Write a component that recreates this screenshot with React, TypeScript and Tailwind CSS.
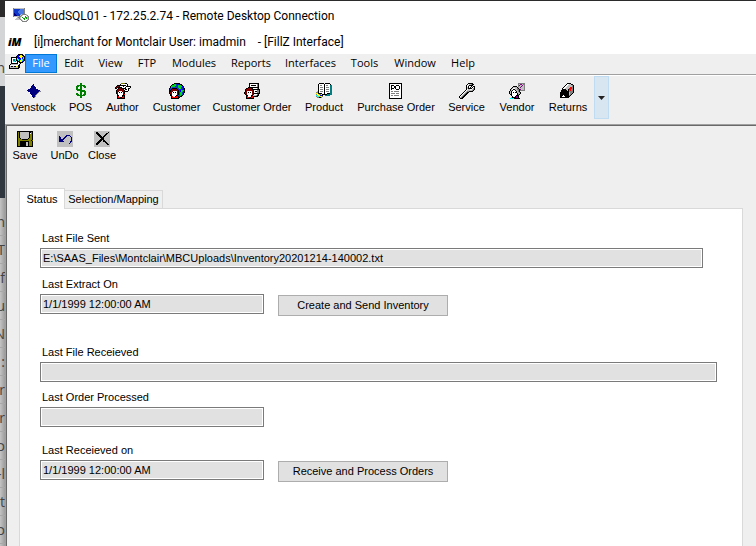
import type { ReactNode } from 'react'

const PALETTE: Record<string, string> = {
  k: '#000000',
  w: '#ffffff',
  g: '#808080',
  s: '#c0c0c0',
  n: '#000080',
  b: '#0000ff',
  e: '#00a000',
  l: '#00d820',
  d: '#008000',
  r: '#ff0000',
  m: '#800000',
  y: '#ffff00',
  o: '#808000',
  p: '#800080',
  c: '#00ffff',
  t: '#008080',
  u: '#1038c8',
  a: '#4878e0',
}

// 16x16 bitmap icon, one character per pixel
function PixelIcon({ rows }: { rows: string[] }) {
  return (
    <svg viewBox="0 0 16 16" className="h-4 w-4 shrink-0" shapeRendering="crispEdges" aria-hidden="true">
      {rows.flatMap((row, y) =>
        row.split('').map((ch, x) =>
          PALETTE[ch] ? <rect key={`${x}-${y}`} x={x} y={y} width="1" height="1" fill={PALETTE[ch]} /> : null,
        ),
      )}
    </svg>
  )
}

const ICONS = {
  venstock: [
    '................',
    '.......n........',
    '......nnw.......',
    '.....nnnnw......',
    '.....nnnnnw.....',
    '....nnnnnnw.....',
    '..nnnnnnnnnn....',
    '.nnnnnnnnnnnnn..',
    '..nnnnnnnnnnngg.',
    '...wnnnnnnnng...',
    '....nnnnnnng....',
    '....wnnnnng.....',
    '.....wnnng......',
    '......nnng......',
    '.......ng.......',
    '................',
  ],
  pos: [
    '.......dd.......',
    '.......dd.......',
    '....dddddddd....',
    '...ddd.dd.ddd...',
    '...dd..dd..dd...',
    '...dd..dd.......',
    '...dddddd.......',
    '....dddddddd....',
    '.......dddddd...',
    '.......dd..dd...',
    '...dd..dd..dd...',
    '...ddd.dd.ddd...',
    '....dddddddd....',
    '.......dd.......',
    '.......dd.......',
    '................',
  ],
  author: [
    '......ooookk....',
    '.....kwwwwwwk...',
    '..kkkkkkkkkwk...',
    '.kmmkwwwkwwkkkkk',
    'kmkkkkkwwwkwwwwk',
    'kk.kmmkkkkkwwkk.',
    '..kmmmmmkwkkwk..',
    '.kmmmmmmmkwwwk..',
    '.kmmwwwmmkkkk...',
    '.kmwkwkwmk......',
    '.kmwwwwwmk......',
    '..kwwwwwkr......',
    '..kkwwwkkk......',
    '..krwwwkrk......',
    '..krrkkrrk......',
    '..kkkkkkkk......',
  ],
  customer: [
    '.....kkkkkk.....',
    '...kkllubbkkk...',
    '..klllluulllbk..',
    '.klllluuullllbk.',
    '.kluuuuuulllubk.',
    'kuukkkkkuulluubk',
    'kukmmmmmkuuuubbk',
    'kkmmmmmmmkublllk',
    'kkmmwwwwmkubllbk',
    'kmmwkwkwmkullubk',
    'kmmwwwwwmkulluk.',
    '.kmwwwwwmkulluk.',
    '.kkwwwwkkuulbk..',
    '..krwwkrrkukk...',
    '..krrrrrrkk.....',
    '..kkkkkkkk......',
  ],
  customerOrder: [
    '.....kkkkkkkkkk.',
    '.....kwwwwwwwgk.',
    '.....kwkkkkkwgk.',
    '.....kwwwwwwwgk.',
    '....kkkkkkkkkkk.',
    '..kkmmmkkwwwwgk.',
    '.kmmmmmmkkkkkkkk',
    '.kmmmmmmmkwwwggk',
    '.kmwwwwwmkwkkggk',
    'kmmwkwkwmkwwwggk',
    'kmmwwwwwmkkkkkkk',
    '.kmwwwwwmkwwwgk.',
    '..kkwwwkksssgkk.',
    '..krwwwkrkkkkk..',
    '..krrkkrrk......',
    '..kkkkkkkk......',
  ],
  product: [
    '...kkkkk.kkkkk..',
    '..kwwwwwkwwwwwk.',
    '..kwggwwkwggwwtt',
    '..kwwwwwkwwwwwtt',
    '..kwgggwkwgggwtt',
    '..kwwwwwkwwwwwtt',
    '..kwgggwkwgggwtt',
    '..kwwwwwkwwwwwtt',
    '.ckwgggwkwgggwtt',
    'ggkwwwwwkwwwwwtt',
    'yykkkkwwkwwkkktt',
    'gyyggykkkkkttttt',
    'ccyybbk..ttttt..',
    'gcccyyg.........',
    '.ggkkg..........',
    '................',
  ],
  purchaseOrder: [
    '.kkkkkkkkkkkkk..',
    '.kwwwwwwwwwwwk..',
    '.kwkkkwwkkkwwk..',
    '.kwkwwkkwwwkwk..',
    '.kwkwwkkwwwkwk..',
    '.kwkkkwkwwwkwk..',
    '.kwkwwwwkkkwwk..',
    '.kwwwwwwwwwwwk..',
    '.kwggwgggggwwk..',
    '.kwwwwwwwwwwwk..',
    '.kwggggwgggwwk..',
    '.kwwwwwwwwwwwk..',
    '.kwggwgggggwwk..',
    '.kwwwwwwwwwwwk..',
    '.kwwwwwwwwwwwk..',
    '.kkkkkkkkkkkkk..',
  ],
  service: [
    '.........kkkkk..',
    '........kwssgkk.',
    '.......kwskkkk..',
    '.......kwkwwk.kk',
    '.......kskwk.kwk',
    '.......kskkkkwgk',
    '.......kwsswwsgk',
    '......kwsssssgk.',
    '.....kwsggkkkk..',
    '....kwsgkk......',
    '...kwsgkk.......',
    '..kwsgkk........',
    '.kwsgkk.........',
    'kwsgkk..........',
    'ksgkk...........',
    '.kkk............',
  ],
  vendor: [
    '.........ggggggg',
    '.........gsppsgg',
    '.........gpsspsg',
    '....kkkk.gsspssg',
    '...kssssksspsssg',
    '..kswwssgksssssg',
    '.kswkkssggkpsssg',
    '.kskwwkssgkggggg',
    'kskwwwwksgk.....',
    'kskwkwkkssgk....',
    'kskwwwwwkssk....',
    '.kkwwwwwkgk.....',
    '..kwwwwkkk......',
    '...kwwkppk......',
    '..ckkkkppk......',
    '.cccckkkkkk.....',
  ],
  returns: [
    '.......kkkk.....',
    '......kwwsskk...',
    '.....kwwssssgk..',
    '....kwwsssssgk..',
    '...kwwssssrrgk..',
    '..kwwssssrrrgk..',
    '..kkkksskrrggk..',
    '.kkkkkkskgrggk..',
    '.kkkkkkkkggggk..',
    'kkkkkkkkksgggk..',
    'kkkkkkkkksggk...',
    'kkkkkkkkksgk....',
    'kkkwkkkkkgk.....',
    'kkwwwkkkkk......',
    'kkkkkkkkk.......',
    '................',
  ],
  save: [
    'kkkkkkkkkkkkkkkk',
    'kokssssssssskkok',
    'kokssssssssskwok',
    'kokssssssssskook',
    'kokssssssssskook',
    'kokssssssssskook',
    'kokssssssssskook',
    'kookssssssskoook',
    'kooookkkkkkooook',
    'koooooooooooooko',
    'kookkkkkkkkkoook',
    'kookkkkkksskoook',
    'kookkkkkksskoook',
    'kookkkkkksskoook',
    'kookkkkkksskoook',
    'kkkkkkkkkkkkkkkk',
  ],
  undo: [
    'ssssssssssssssss',
    'ssssssssssssssss',
    'ssssssssssssssss',
    'ssssssssssssssss',
    'sssssssssnnnnsss',
    'ssnsssssnnsssnss',
    'ssnnsssnnsssssns',
    'ssnnssnnssssssns',
    'ssnnnnnsssssssns',
    'ssnnnnssssssssns',
    'ssnnnnnssssssnns',
    'sssssssssssssnss',
    'ssssssssssssnsss',
    'ssssssssssssssss',
    'ssssssssssssssss',
    'ssssssssssssssss',
  ],
  close: [
    'ssssssssssssssss',
    'sskkssssssssssks',
    'sskkkssssssskkss',
    'ssskkkssssskksss',
    'sssskkkssskkssss',
    'ssssskkkskksssss',
    'sssssskkkkssssss',
    'ssssssskkkssssss',
    'sssssskkkkssssss',
    'ssssskkkskksssss',
    'sssskkksskkkssss',
    'ssskkkssssskksss',
    'sskkkssssssskkss',
    'sskkssssssssskks',
    'ssssssssssssssss',
    'ssssssssssssssss',
  ],
  remote: [
    'gssssssssssg....',
    'guuuuuuaaaag....',
    'guuuuuaaaaag....',
    'guuuuaaaaaag....',
    'guuuuaaaaaag....',
    'gnuuuuaaaaag....',
    'gnnuuuuasggggs..',
    'gnnnuuusgswwwsg.',
    'gsssssggswwwewsg',
    '....sggswewweesg',
    '...sssgswweewesg',
    '..sssssgswwewwsg',
    '........gswwwsg.',
    '.........ggggg..',
    '................',
    '................',
  ],
  child: [
    '.........kkkkk..',
    '........kbbyykk.',
    '.......kbbyyyybk',
    '..kkkkkkbbbyybck',
    '..kwwwwkcbbbybck',
    '..kwttckccbbycbk',
    '..kwttckkcbyycbk',
    '..kwcctwkkbyybk.',
    '..kwwwwwkwkkkk..',
    '..kkkkkkkw.k....',
    '.kssssssswk.....',
    'kwwwwwwwwkk.....',
    'kskkskkyskk.....',
    'ksssssssskk.....',
    'kkkkkkkkkk......',
    '................',
  ],
}

const MENU = [
  { label: 'File', width: 'w-8' },
  { label: 'Edit', width: 'w-[34px]' },
  { label: 'View', width: 'w-[39px]' },
  { label: 'FTP', width: 'w-[34px]' },
  { label: 'Modules', width: 'w-[60px]' },
  { label: 'Reports', width: 'w-[54px]' },
  { label: 'Interfaces', width: 'w-[65px]' },
  { label: 'Tools', width: 'w-[43px]' },
  { label: 'Window', width: 'w-[58px]' },
  { label: 'Help', width: 'w-[38px]' },
]

const TOOLBAR = [
  { label: 'Venstock', icon: ICONS.venstock, width: 'w-[57px]' },
  { label: 'POS', icon: ICONS.pos, width: 'w-[37px]' },
  { label: 'Author', icon: ICONS.author, width: 'w-[47px]' },
  { label: 'Customer', icon: ICONS.customer, width: 'w-[61px]' },
  { label: 'Customer Order', icon: ICONS.customerOrder, width: 'w-[90px]' },
  { label: 'Product', icon: ICONS.product, width: 'w-[54px]' },
  { label: 'Purchase Order', icon: ICONS.purchaseOrder, width: 'w-[90px]' },
  { label: 'Service', icon: ICONS.service, width: 'w-[51px]' },
  { label: 'Vendor', icon: ICONS.vendor, width: 'w-[50px]' },
  { label: 'Returns', icon: ICONS.returns, width: 'w-[52px]' },
]

const ACTIONS = [
  { label: 'Save', icon: ICONS.save, width: 'w-9' },
  { label: 'UnDo', icon: ICONS.undo, width: 'w-[43px]' },
  { label: 'Close', icon: ICONS.close, width: 'w-8' },
]

// Letters of the window behind that stick out at the left edge
const BEHIND = ['n', 'T', 'f', 'u', 'N', ':', 'r', 'er', 'o', '-l', 't', 'o']

function ToolButton({ label, icon, width }: { label: string; icon: string[]; width: string }) {
  return (
    <button type="button" className={`flex shrink-0 flex-col items-center whitespace-nowrap ${width}`}>
      <PixelIcon rows={icon} />
      <span className="leading-4">{label}</span>
    </button>
  )
}

function Field({ id, label, value = '', className }: { id: string; label: string; value?: string; className: string }) {
  return (
    <div className={`flex flex-col ${className}`}>
      <label htmlFor={id} className="pl-0.5 leading-5">
        {label}
      </label>
      <input
        id={id}
        readOnly
        defaultValue={value}
        className="h-5 w-full border border-[#7a7a7a] bg-[#e1e1e1] px-0.5 ring-1 ring-white outline-none ring-inset"
      />
    </div>
  )
}

function PushButton({ children }: { children: ReactNode }) {
  return (
    <button type="button" className="-mb-0.5 h-[21px] w-[170px] border border-[#adadad] bg-[#e1e1e1]">
      {children}
    </button>
  )
}

export default function App() {
  return (
    <div className="flex h-screen overflow-hidden bg-[#efefef] font-['Liberation_Sans',sans-serif] text-[11px] text-black">
      {/* Window behind */}
      <div
        className="flex w-[5px] shrink-0 flex-col overflow-hidden font-['Open_Sans',sans-serif] text-sm whitespace-nowrap text-[#444]"
        aria-hidden="true"
      >
        <div className="h-[17px] shrink-0 bg-[#2b2b2b]" />
        <div className="flex h-[69px] shrink-0 items-end justify-end bg-[#d4d5d6] pb-2">n</div>
        <div className="h-28 shrink-0 bg-[#2f363d]" />
        <div className="flex grow flex-col bg-linear-to-r from-[#c4c4c4] to-[#9c9c9c] pt-2.5">
          {BEHIND.map((text, i) => (
            <span key={i} className="flex h-7 shrink-0 items-center justify-end border-b border-[#a8a8a8]">
              {text}
            </span>
          ))}
        </div>
      </div>

      <div className="flex min-w-0 grow flex-col border-t border-[#2b2b2b]">
        <header className="bg-white font-['Roboto',sans-serif] text-xs">
          <div className="flex h-[29px] items-center gap-[5px] pl-2">
            <PixelIcon rows={ICONS.remote} />
            <span>CloudSQL01 - 172.25.2.74 - Remote Desktop Connection</span>
          </div>
          <div className="flex h-6 items-center pl-[3px]">
            <span className="w-[26px] font-['Open_Sans',sans-serif] text-[11px] font-extrabold italic">iM</span>
            <span className="whitespace-pre">[i]merchant for Montclair User: imadmin    - [FillZ Interface]</span>
          </div>
        </header>

        <nav className="flex h-[21px] items-start border-b border-[#a0a0a0] pl-1 font-['Open_Sans',sans-serif]">
          <PixelIcon rows={ICONS.child} />
          <div className="flex grow">
            {MENU.map((item, i) => (
              <button
                key={item.label}
                type="button"
                className={`h-[19px] border ${item.width} ${
                  i === 0 ? 'border-[#0078d7] bg-[#3399ff] text-white' : 'border-transparent'
                }`}
              >
                {item.label}
              </button>
            ))}
          </div>
        </nav>

        <div className="flex h-[50px] shrink-0 items-start border-t border-b border-t-white border-b-[#a0a0a0]">
          <div className="flex pt-[7px]">
            {TOOLBAR.map((item) => (
              <ToolButton key={item.label} {...item} />
            ))}
          </div>
          <button
            type="button"
            aria-label="More"
            className="flex h-[43px] w-[15px] items-center justify-center border border-[#c0dcf3] bg-[#d8e6f2]"
          >
            <svg viewBox="0 0 7 4" className="h-1 w-[7px]" aria-hidden="true">
              <path d="M0 0h7L3.5 4z" fill="#222" />
            </svg>
          </button>
        </div>

        {/* MDI child */}
        <main className="flex grow flex-col border-l border-[#a0a0a0]">
          <div className="flex grow flex-col border-t border-l border-[#696969]">
            <div className="flex pt-[5px]">
              {ACTIONS.map((item) => (
                <ToolButton key={item.label} {...item} />
              ))}
            </div>

            <div className="mt-[25px] ml-3 flex items-end" role="tablist">
              <button
                type="button"
                role="tab"
                aria-selected="true"
                className="z-10 -mb-px h-[21px] w-[46px] border border-b-0 border-[#d9d9d9] bg-white"
              >
                Status
              </button>
              <button
                type="button"
                role="tab"
                aria-selected="false"
                className="h-[18px] w-[98px] border border-b-0 border-l-0 border-[#d9d9d9]"
              >
                Selection/Mapping
              </button>
            </div>

            <section
              className="mr-[13px] ml-3 grow border border-b-0 border-[#d9d9d9] bg-white pt-[19px] pr-[25px] pl-5"
              role="tabpanel"
            >
              <Field
                id="file-sent"
                label="Last File Sent"
                value="E:\SAAS_Files\Montclair\MBCUploads\Inventory20201214-140002.txt"
                className="mr-3.5"
              />
              <div className="mt-1.5 flex items-end gap-3.5">
                <Field id="extract-on" label="Last Extract On" value="1/1/1999 12:00:00 AM" className="w-56" />
                <PushButton>Create and Send Inventory</PushButton>
              </div>
              <Field id="file-received" label="Last File Receieved" className="mt-7" />
              <Field id="order-processed" label="Last Order Processed" className="mt-[5px] w-56" />
              <div className="mt-[13px] flex items-end gap-3.5">
                <Field id="received-on" label="Last Receieved on" value="1/1/1999 12:00:00 AM" className="w-56" />
                <PushButton>Receive and Process Orders</PushButton>
              </div>
            </section>
          </div>
        </main>
      </div>
    </div>
  )
}
